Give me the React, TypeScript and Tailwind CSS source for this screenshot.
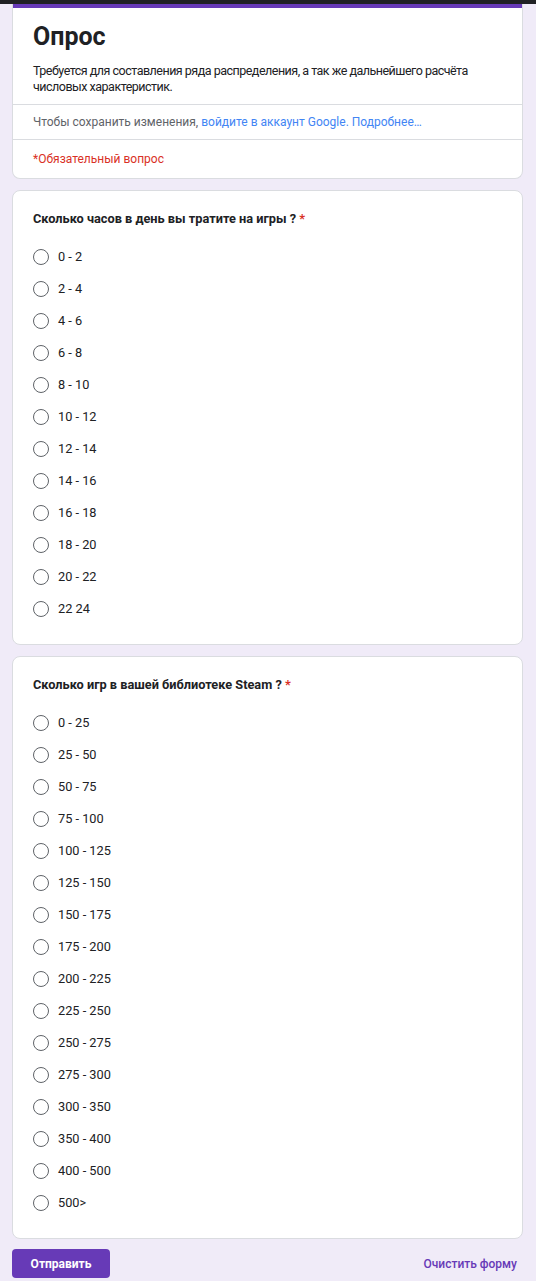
import React, { useState } from 'react';

const HOURS = ['0 - 2', '2 - 4', '4 - 6', '6 - 8', '8 - 10', '10 - 12', '12 - 14', '14 - 16', '16 - 18', '18 - 20', '20 - 22', '22 24'];
const GAMES = ['0 - 25', '25 - 50', '50 - 75', '75 - 100', '100 - 125', '125 - 150', '150 - 175', '175 - 200', '200 - 225', '225 - 250', '250 - 275', '275 - 300', '300 - 350', '350 - 400', '400 - 500', '500>'];

const Question: React.FC<{ title: string; options: string[]; className?: string }> = ({ title, options, className }) => {
  const [value, setValue] = useState<string | null>(null);
  return (
    <div className={`bg-white rounded-lg border border-[#dadce0] px-5 pt-5 pb-[19px] ${className ?? ''}`}>
      <div className="h-4 text-[12.75px] leading-4 font-bold text-[#202124]">
        {title} <span className="text-[#d93025]">*</span>
      </div>
      <div className="mt-[14px] flex flex-col">
        {options.map(o => (
          <label key={o} className="flex items-center h-8 cursor-pointer" onClick={() => setValue(o)}>
            <span className="w-4 h-4 rounded-full border-[1.5px] border-[#5f6368] flex items-center justify-center shrink-0">
              {value === o && <span className="w-2 h-2 rounded-full bg-[#673ab7]" />}
            </span>
            <span className="ml-[9px] text-[12.75px] leading-4 text-[#202124]">{o}</span>
          </label>
        ))}
      </div>
    </div>
  );
};

export default function App() {
  return (
    <div className="min-h-[1281px] bg-[#f0ebf8] font-['Roboto','Liberation_Sans',sans-serif]">
      <div className="h-1 bg-[#202124]" />
      <div className="px-3 pr-[13px]">
        {/* Header */}
        <div className="bg-white rounded-b-lg border-x border-b border-[#dadce0] overflow-hidden">
          <div className="h-1 bg-[#673ab7] -mx-px" />
          <div className="px-5 pt-[14px] pb-[9px]">
            <h1 className="text-[25px] leading-[30px] font-bold text-[#202124]">Опрос</h1>
            <p className="mt-[11px] text-[12.5px] leading-4 tracking-[-0.5px] text-[#202124]">
              Требуется для составления ряда распределения, а так же дальнейшего расчёта числовых характеристик.
            </p>
          </div>
          <div className="border-t border-[#dadce0] px-5 h-[35px] flex items-center text-[12px] text-[#5f6368]">
            Чтобы сохранить изменения,&nbsp;<span className="text-[#4285f4]">войдите в аккаунт Google. Подробнее…</span>
          </div>
          <div className="border-t border-[#dadce0] px-5 h-[39px] flex items-center text-[12px] text-[#d93025]">
            *Обязательный вопрос
          </div>
        </div>

        <Question title="Сколько часов в день вы тратите на игры ?" options={HOURS} className="mt-[11px]" />
        <Question title="Сколько игр в вашей библиотеке Steam ?" options={GAMES} className="mt-[11px]" />

        <div className="mt-[10px] flex items-center justify-between pb-1">
          <button className="w-[98px] h-[29px] rounded bg-[#673ab7] text-white text-[12px] font-bold">Отправить</button>
          <button className="text-[12px] font-medium text-[#673ab7] pr-[6px]">Очистить форму</button>
        </div>
      </div>
    </div>
  );
}
